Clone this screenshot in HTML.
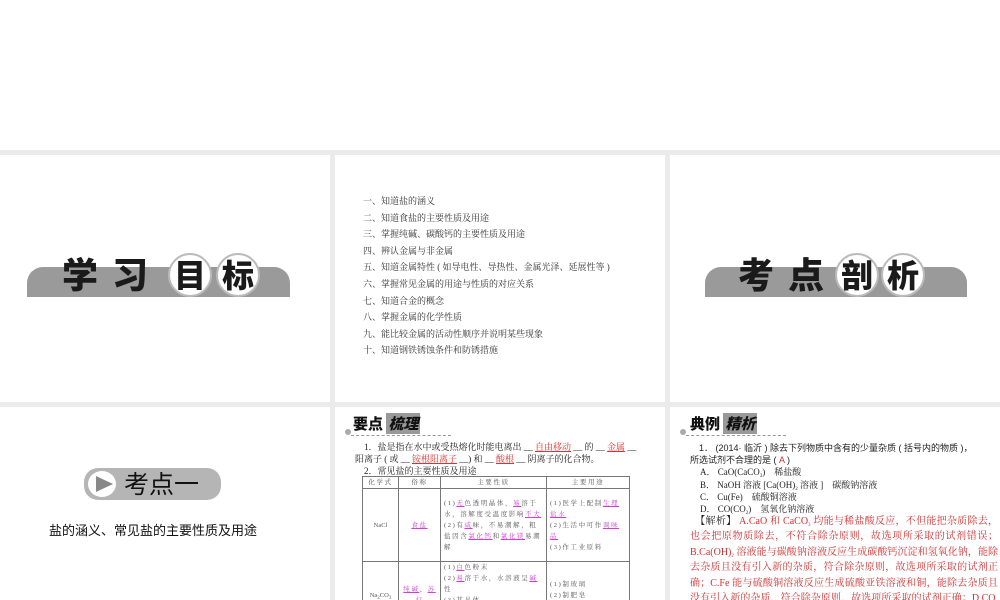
<!DOCTYPE html>
<html><head><meta charset="utf-8"><style>
*{margin:0;padding:0;box-sizing:border-box}
body{width:1000px;height:600px;background:#ebebeb;position:relative;overflow:hidden;font-family:"Liberation Serif","Noto Serif CJK SC",serif}
.top{position:absolute;left:0;top:0;width:1000px;height:150px;background:#fff}
.s{position:absolute;background:#fff;overflow:hidden}
.ban{position:absolute;height:30px;background:#9a9a9a;border-radius:16px 16px 0 0}
.bt{position:absolute;font-family:"Noto Sans CJK SC",sans-serif;font-weight:900;font-size:36px;color:#1a1a1a;line-height:44px}
.circ{position:absolute;width:44px;height:44px;border-radius:50%;background:#fff;border:2px solid #bbb;font-family:"Noto Sans CJK SC",sans-serif;font-weight:900;font-size:32px;line-height:38px;text-align:center;color:#1a1a1a}
.list{position:absolute;left:363px;top:193px;font-size:9px;line-height:16.6px;color:#333}
.hd{position:absolute;font-family:"Noto Sans CJK SC",sans-serif;font-weight:900;font-size:15px;color:#111}
.hd b{background:#999;color:#111;padding:0 2px;font-style:italic}
.dot{position:absolute;width:6px;height:6px;border-radius:50%;background:#aaa}
.dash{position:absolute;border-top:1px dashed #999;height:0}
.p{position:absolute;font-size:9px;line-height:12px;color:#222;font-family:"Liberation Serif","Noto Serif CJK SC",serif}
.r{color:#e03030;text-decoration:underline}
.red{color:#d23030}
sub{font-size:5px;vertical-align:baseline;position:relative;top:2px;line-height:0}
table{position:absolute;border-collapse:collapse;table-layout:fixed;font-size:6.5px;color:#555;line-height:11px;letter-spacing:1.6px}
td{border:1px solid #777;padding:0 3px;vertical-align:middle}
.m{color:#d040d0;text-decoration:underline}
</style></head><body>
<div class="top"></div>

<div class="s" style="left:0;top:155px;width:330px;height:247px">
 <div class="ban" style="left:27px;top:112px;width:263px"></div>
 <div class="bt" style="left:62px;top:96px;letter-spacing:14px">学习</div>
 <div class="circ" style="left:168px;top:98px">目</div>
 <div class="circ" style="left:216px;top:98px">标</div>
</div>

<div class="s" style="left:335px;top:155px;width:330px;height:247px"></div>
<div class="list">一、知道盐的涵义<br>二、知道食盐的主要性质及用途<br>三、掌握纯碱、碳酸钙的主要性质及用途<br>四、辨认金属与非金属<br>五、知道金属特性 ( 如导电性、导热性、金属光泽、延展性等 )<br>六、掌握常见金属的用途与性质的对应关系<br>七、知道合金的概念<br>八、掌握金属的化学性质<br>九、能比较金属的活动性顺序并说明某些现象<br>十、知道钢铁锈蚀条件和防锈措施</div>

<div class="s" style="left:670px;top:155px;width:330px;height:247px">
 <div class="ban" style="left:35px;top:112px;width:262px"></div>
 <div class="bt" style="left:68px;top:96px;letter-spacing:14px">考点</div>
 <div class="circ" style="left:165px;top:98px">剖</div>
 <div class="circ" style="left:211px;top:98px">析</div>
</div>

<div class="s" style="left:0;top:407px;width:330px;height:193px">
 <div style="position:absolute;left:84px;top:61px;width:137px;height:32px;border-radius:14px;background:#b5b5b5"></div>
 <div style="position:absolute;left:88px;top:64px;width:28px;height:26px;border-radius:50%;background:#fff"></div>
 <div style="position:absolute;left:96px;top:69px;width:0;height:0;border-left:17px solid #888;border-top:8px solid transparent;border-bottom:8px solid transparent"></div>
 <div style="position:absolute;left:124px;top:58px;font-family:'Noto Sans CJK SC',sans-serif;font-size:25px;line-height:36px;color:#111">考点一</div>
 <div style="position:absolute;left:49px;top:113px;font-family:'Noto Sans CJK SC',sans-serif;font-size:13px;color:#111">盐的涵义、常见盐的主要性质及用途</div>
</div>

<div class="s" style="left:335px;top:407px;width:330px;height:193px">
 <div class="dot" style="left:10px;top:22px"></div>
 <div class="hd" style="left:18px;top:6px">要点 <b>梳理</b></div>
 <div class="dash" style="left:16px;top:28px;width:100px"></div>
 <div class="p" style="left:20px;top:34px;width:305px">　1．盐是指在水中或受热熔化时能电离出 __ <span class="r">自由移动</span> __ 的 __ <span class="r">金属</span> __</div>
 <div class="p" style="left:20px;top:46px">阳离子 ( 或 __ <span class="r">铵根阳离子</span> __) 和 __ <span class="r">酸根</span> __ 阴离子的化合物。</div>
 <div class="p" style="left:20px;top:58px">　2．常见盐的主要性质及用途</div>
 <table style="left:27px;top:69px;width:268px">
  <colgroup><col style="width:36px"><col style="width:42px"><col style="width:106px"><col></colgroup>
  <tr style="height:9px"><td style="text-align:center">化学式</td><td style="text-align:center">俗称</td><td style="text-align:center">主要性质</td><td style="text-align:center">主要用途</td></tr>
  <tr style="height:73px"><td style="text-align:center;letter-spacing:0">NaCl</td><td style="text-align:center"><span class="m">食盐</span></td><td>(1)<span class="m">无</span>色透明晶体，<span class="m">易</span>溶于水，溶解度受温度影响<span class="m">不大</span><br>(2)有<span class="m">咸</span>味，不易潮解，粗盐因含<span class="m">氯化钙</span>和<span class="m">氯化镁</span>易潮解</td><td>(1)医学上配制<span class="m">生理盐水</span><br>(2)生活中可作<span class="m">调味品</span><br>(3)作工业原料</td></tr>
  <tr style="height:60px"><td style="text-align:center;letter-spacing:0">Na<sub>2</sub>CO<sub>3</sub></td><td style="text-align:center"><span class="m">纯碱</span>、<span class="m">苏打</span></td><td style="vertical-align:top">(1)<span class="m">白</span>色粉末<br>(2)<span class="m">易</span>溶于水，水溶液呈<span class="m">碱</span>性<br>(3)其晶体<span class="m">Na₂CO₃·10H₂O</span>(化学式)在干</td><td>(1)制玻璃<br>(2)制肥皂<br>(3)用于造纸、纺织</td></tr>
 </table>
</div>

<div class="s" style="left:670px;top:407px;width:330px;height:193px">
 <div class="dot" style="left:10px;top:22px"></div>
 <div class="hd" style="left:20px;top:6px">典例 <b>精析</b></div>
 <div class="dash" style="left:16px;top:28px;width:100px"></div>
 <div class="p" style="left:20px;top:35px;font-family:'Liberation Sans','Noto Sans CJK SC',sans-serif">　1． (2014· 临沂 ) 除去下列物质中含有的少量杂质 ( 括号内的物质 )，</div>
 <div class="p" style="left:20px;top:47px;font-family:'Liberation Sans','Noto Sans CJK SC',sans-serif">所选试剂不合理的是 ( <span class="red">A</span> )</div>
 <div class="p" style="left:30px;top:59px">A． CaO(CaCO<sub>3</sub>)　稀盐酸</div>
 <div class="p" style="left:30px;top:72px">B． NaOH 溶液 [Ca(OH)<sub>2</sub> 溶液 ]　碳酸钠溶液</div>
 <div class="p" style="left:30px;top:84px">C． Cu(Fe)　硫酸铜溶液</div>
 <div class="p" style="left:30px;top:96px">D． CO(CO<sub>2</sub>)　氢氧化钠溶液</div>
 <div class="p red" style="left:20px;top:107px;width:308px;font-size:10px;line-height:15.4px;text-align:justify"><span style="color:#222">　【解析】</span> A.CaO 和 CaCO<sub>3</sub> 均能与稀盐酸反应，不但能把杂质除去，也会把原物质除去，不符合除杂原则，故选项所采取的试剂错误；B.Ca(OH)<sub>2</sub> 溶液能与碳酸钠溶液反应生成碳酸钙沉淀和氢氧化钠，能除去杂质且没有引入新的杂质，符合除杂原则，故选项所采取的试剂正确；C.Fe 能与硫酸铜溶液反应生成硫酸亚铁溶液和铜，能除去杂质且没有引入新的杂质，符合除杂原则，故选项所采取的试剂正确；D.CO<sub>2</sub> 能与氢氧化钠溶液反应生成碳酸钠和水，CO 不与氢氧化钠溶液反应，能除去杂质且没有引入新的杂质，符合除杂原则，故选项所采取的试剂正确。</div>
</div>
</body></html>
